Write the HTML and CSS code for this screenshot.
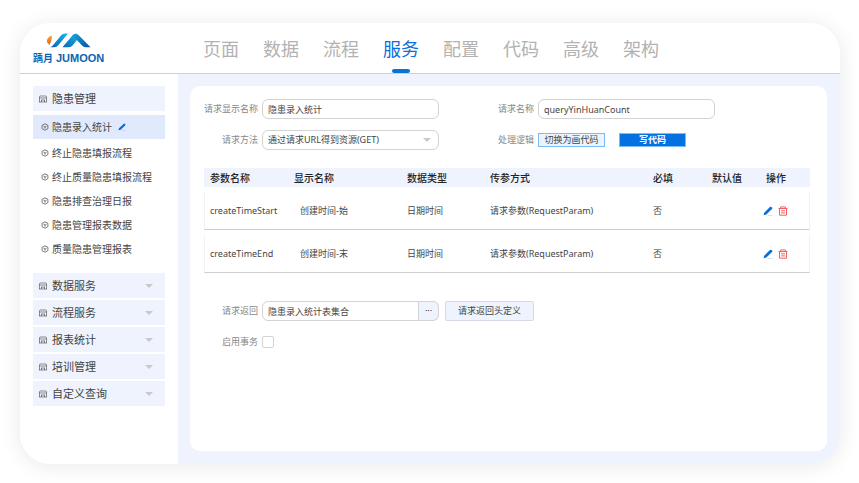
FILE: index.html
```html
<!DOCTYPE html>
<html lang="zh-CN">
<head>
<meta charset="utf-8">
<meta name="viewport" content="width=device-width, initial-scale=1">
<title>JUMOON</title>
<link rel="stylesheet" href="styles.css">
</head>
<body>
<svg class="sprite" aria-hidden="true">
  <symbol id="db" viewBox="0 0 8 8"><path d="M.5 7V2Q.5 1 1.500 1H6.500Q7.500 1 7.500 2V7M.5 3H7.500M2 5H6M0 7H8M2.500 5V7M5.500 5V7" fill="none" stroke="currentColor" stroke-width=".6"/></symbol>
  <symbol id="cube" viewBox="0 0 8 8"><path d="M4 .8 6.900 2.300V5.700L4 7.200 1.100 5.700V2.300ZM2.500 3.200 4 4 5.500 3.200M4 4V5.500" fill="none" stroke="currentColor" stroke-width=".7"/></symbol>
  <symbol id="pen" viewBox="0 0 10 10"><path d="M.5 9.200 1.200 6.700 6.900 1.100Q7.900.3 8.900 1.200T9 3.100L3.300 8.500Z" fill="currentColor"/><path d="M5 9.500h4.500" stroke="currentColor" stroke-width=".5" opacity=".4"/></symbol>
  <symbol id="bin" viewBox="0 0 10 10"><path d="M.5 2.500h9M2.200 2.400 2.800.9h4.400l.6 1.500M1.500 2.700V9.200H8.500V2.700M3 4.800h4M3 6.900h4" fill="none" stroke="currentColor" stroke-width="1"/></symbol>
</svg>
<div class="app">
  <header class="topbar">
    <a class="logo" href="#" aria-label="JUMOON">
      <svg class="logo-mark" viewBox="0 0 44 15" aria-hidden="true">
        <defs>
          <linearGradient id="blue-a" x1="0" y1="1" x2="1" y2="0"><stop stop-color="#0764b4"/><stop offset="1" stop-color="#19b8ea"/></linearGradient>
          <linearGradient id="blue-b" x1="0" y1="0" x2="1" y2="1"><stop stop-color="#12a4dd"/><stop offset="1" stop-color="#0753a6"/></linearGradient>
          <linearGradient id="orange" x1="0" y1="0" x2="0" y2="1"><stop stop-color="#f8a13c"/><stop offset="1" stop-color="#e9600f"/></linearGradient>
        </defs>
        <path d="M4.600 2.500Q-1 5 .2 9.200L2.400 12Q5.600 7.500 4.600 2.500Z" fill="url(#orange)"/>
        <path d="M3.200 14.200Q5.200 13.400 6.400 11.800L14 2.600Q15.800.5 18 .5H21L11.500 12Q9.700 14.200 7 14.200Z" fill="url(#blue-a)"/>
        <path d="M15.500 14.200 25 3Q27 .5 29.500.5L31.500 5 26 12Q24.300 14.200 21.500 14.200Z" fill="url(#blue-a)"/>
        <path d="M24.500 3.500Q28-1.200 32 2.400L43.500 14.200H38.500Q36.500 14.200 35 12.500L28 5Z" fill="url(#blue-b)"/>
      </svg>
      <span class="logo-text"><span class="logo-cn">踽月</span><span>JUMOON</span></span>
    </a>
    <nav class="tabs">
      <a href="#">页面</a><a href="#">数据</a><a href="#">流程</a><a href="#" class="active" aria-current="page">服务</a><a href="#">配置</a><a href="#">代码</a><a href="#">高级</a><a href="#">架构</a>
    </nav>
  </header>
  <div class="body">
    <aside class="sidebar">
      <a class="group" href="#"><svg class="icon"><use href="#db"/></svg>隐患管理</a>
      <ul class="sub">
        <li class="active"><a href="#"><svg class="icon"><use href="#cube"/></svg>隐患录入统计<svg class="pen"><use href="#pen"/></svg></a></li>
        <li><a href="#"><svg class="icon"><use href="#cube"/></svg>终止隐患填报流程</a></li>
        <li><a href="#"><svg class="icon"><use href="#cube"/></svg>终止质量隐患填报流程</a></li>
        <li><a href="#"><svg class="icon"><use href="#cube"/></svg>隐患排查治理日报</a></li>
        <li><a href="#"><svg class="icon"><use href="#cube"/></svg>隐患管理报表数据</a></li>
        <li><a href="#"><svg class="icon"><use href="#cube"/></svg>质量隐患管理报表</a></li>
      </ul>
      <div class="groups">
        <a class="group folded" href="#"><svg class="icon"><use href="#db"/></svg>数据服务</a>
        <a class="group folded" href="#"><svg class="icon"><use href="#db"/></svg>流程服务</a>
        <a class="group folded" href="#"><svg class="icon"><use href="#db"/></svg>报表统计</a>
        <a class="group folded" href="#"><svg class="icon"><use href="#db"/></svg>培训管理</a>
        <a class="group folded" href="#"><svg class="icon"><use href="#db"/></svg>自定义查询</a>
      </div>
    </aside>
    <main class="main">
      <form class="panel">
        <div class="fields">
          <label for="title">请求显示名称</label>
          <input class="field" id="title" type="text" value="隐患录入统计">
          <label for="name">请求名称</label>
          <input class="field" id="name" type="text" value="queryYinHuanCount">
          <label class="row-start" for="method">请求方法</label>
          <div class="select">
            <select class="field" id="method"><option>通过请求URL得到资源(GET)</option></select>
          </div>
          <span class="label">处理逻辑</span>
          <div class="modes">
            <button type="button" class="mode">切换为画代码</button>
            <button type="button" class="mode primary">写代码</button>
          </div>
        </div>
        <table class="params">
          <colgroup><col class="c-name"><col class="c-title"><col class="c-type"><col class="c-way"><col class="c-need"><col class="c-default"><col class="c-ops"></colgroup>
          <thead>
            <tr><th>参数名称</th><th>显示名称</th><th>数据类型</th><th>传参方式</th><th>必填</th><th>默认值</th><th>操作</th></tr>
          </thead>
          <tbody>
            <tr><td>createTimeStart</td><td class="indent">创建时间-始</td><td>日期时间</td><td>请求参数(RequestParam)</td><td>否</td><td></td>
              <td class="ops"><button type="button" class="edit" aria-label="编辑"><svg><use href="#pen"/></svg></button><button type="button" class="delete" aria-label="删除"><svg><use href="#bin"/></svg></button></td></tr>
            <tr><td>createTimeEnd</td><td class="indent">创建时间-末</td><td>日期时间</td><td>请求参数(RequestParam)</td><td>否</td><td></td>
              <td class="ops"><button type="button" class="edit" aria-label="编辑"><svg><use href="#pen"/></svg></button><button type="button" class="delete" aria-label="删除"><svg><use href="#bin"/></svg></button></td></tr>
          </tbody>
        </table>
        <div class="fields">
          <label for="result">请求返回</label>
          <div class="picker">
            <input class="field" id="result" type="text" value="隐患录入统计表集合">
            <button type="button" class="more" aria-label="选择">···</button>
          </div>
          <button type="button" class="define">请求返回头定义</button>
          <label class="row-start" for="tx">启用事务</label>
          <input class="check" id="tx" type="checkbox">
        </div>
      </form>
    </main>
  </div>
</div>
</body>
</html>
```

FILE: styles.css
```css
* { box-sizing: border-box; }

body {
  margin: 0;
  min-height: 100vh;
  padding: 23px 19px 19px 20px;
  display: flex;
  flex-direction: column;
  background: #fff;
  color: #444;
  font: 9px/14px "Noto Sans", "Noto Sans CJK SC", sans-serif;
}

a { color: inherit; text-decoration: none; }
button, input, select { font: inherit; color: inherit; margin: 0; }
button { padding: 0; cursor: pointer; }
.sprite { display: none; }

.app {
  flex: 1;
  display: flex;
  flex-direction: column;
  border-radius: 30px;
  overflow: hidden;
  background: #fff;
  box-shadow: 0 2px 22px rgba(0, 0, 0, 0.09);
}

/* Header */
.topbar {
  display: flex;
  height: 51px;
  border-bottom: 1px solid #cbd1dc;
}
.logo {
  width: 183px;
  padding: 10px 0 0 13px;
  color: #0b63b0;
}
.logo-mark { display: block; width: 44px; height: 15px; margin-left: 14px; }
.logo-text {
  display: flex;
  align-items: center;
  gap: 3px;
  margin-top: 3px;
  font: bold 11px/14px "Liberation Sans", sans-serif;
}
.logo-cn { font: bold 10px/14px "Noto Sans CJK SC", sans-serif; }
.tabs { display: flex; gap: 24px; }
.tabs a {
  display: flex;
  flex-direction: column;
  align-items: center;
  justify-content: space-between;
  padding-top: 13px;
  font-size: 18px;
  line-height: 26px;
  color: #b2b2b2;
}
.tabs .active { color: #0a6fdc; }
.tabs .active::after {
  content: "";
  width: 18px;
  height: 4px;
  border-radius: 2px;
  background: #0a73d2;
}

.body { flex: 1; display: flex; }

/* Sidebar */
.sidebar { width: 158px; padding: 12px 13px; }
.group {
  display: flex;
  align-items: center;
  height: 25px;
  padding: 0 12px 0 6px;
  gap: 5px;
  background: #eff3fd;
  font-size: 11px;
}
.icon { width: 8px; height: 8px; flex: none; }
.folded::after {
  content: "";
  margin-left: auto;
  border: 4px solid transparent;
  border-top-color: #c9c9c9;
  border-bottom-width: 0;
}
.groups { display: grid; gap: 2px; }
.sub { list-style: none; margin: 4px 0 12px; padding: 0; font-size: 10px; }
.sub a {
  display: flex;
  align-items: center;
  height: 24px;
  padding-left: 8px;
  gap: 3px;
  white-space: nowrap;
}
.sub .active { background: #e1eafd; margin-bottom: 2px; }
.pen { width: 8px; height: 8px; margin-left: 3px; color: #0a6fdc; }

/* Main panel */
.main { flex: 1; display: flex; padding: 12px 13px 13px 12px; background: #eff3fd; }
.panel {
  flex: 1;
  padding: 13px 17px 13px 14px;
  border-radius: 10px;
  background: #fff;
}
.fields {
  display: grid;
  grid-template-columns: 54px 177fr 91px 177fr 91fr;
  grid-auto-rows: 20px;
  column-gap: 4px;
  row-gap: 11px;
  align-items: center;
}
.fields > label, .label { text-align: right; color: #888; white-space: nowrap; }
.row-start { grid-column: 1; }
.field {
  display: block;
  width: 100%;
  height: 20px;
  padding: 0 5px;
  border: 1px solid #d3d3d3;
  border-radius: 6px;
  background: #fff;
  outline: 0;
}
.select { position: relative; }
.select .field { appearance: none; }
.select::after {
  content: "";
  position: absolute;
  right: 8px;
  top: 8px;
  border: 4px solid transparent;
  border-top-color: #c9c9c9;
  border-bottom-width: 0;
  pointer-events: none;
}
.modes { display: flex; gap: 14px; }
.mode {
  width: 67px;
  height: 14px;
  border: 1px solid #7abcf7;
  background: #eaf4fe;
  line-height: 12px;
  white-space: nowrap;
}
.primary { background: #0571e0; color: #fff; font-weight: bold; }

/* Parameter table */
.params {
  width: 100%;
  margin: 13px 0 23px;
  table-layout: fixed;
  border-collapse: separate;
  border-spacing: 0 5px;
  text-align: left;
}
.c-name { width: 84px; }
.c-title { width: 113px; }
.c-type { width: 83px; }
.c-way { width: 163px; }
.c-need { width: 59px; }
.c-default { width: 54px; }
.c-ops { width: 50px; }
.params th {
  height: 19px;
  padding: 0 6px;
  background: #eff3fd;
  color: #222;
  font-size: 10px;
  font-weight: 500;
  white-space: nowrap;
}
.params td {
  height: 38px;
  padding: 0 6px;
  border-bottom: 1px solid #cfcfcf;
  white-space: nowrap;
}
.params td:first-child { border-left: 1px solid #f2f2f2; padding-left: 5px; }
.params td:last-child { border-right: 1px solid #f2f2f2; }
.params .indent { padding-left: 12px; }
.params .ops { padding: 0 3px; }
.ops button { height: 14px; border: 0; background: none; vertical-align: top; }
.ops svg { display: block; width: 10px; height: 10px; }
.edit { margin-right: 5px; color: #0a6fdc; }
.delete { color: #f4605f; }

/* Result fields */
.picker { display: flex; }
.picker .field { flex: 1; min-width: 0; border-radius: 6px 0 0 6px; }
.more {
  width: 20px;
  border: 1px solid #d3d3d3;
  border-left: 0;
  border-radius: 0 6px 6px 0;
  background: #eff3fd;
}
.define {
  height: 20px;
  margin-left: 2px;
  border: 1px solid #d5dae6;
  border-radius: 2px;
  background: #eff3fd;
  white-space: nowrap;
}
.check {
  appearance: none;
  width: 12px;
  height: 12px;
  border: 1px solid #d3d3d3;
  border-radius: 2px;
  background: #fff;
}
.check:checked { background: #0571e0; }
```
